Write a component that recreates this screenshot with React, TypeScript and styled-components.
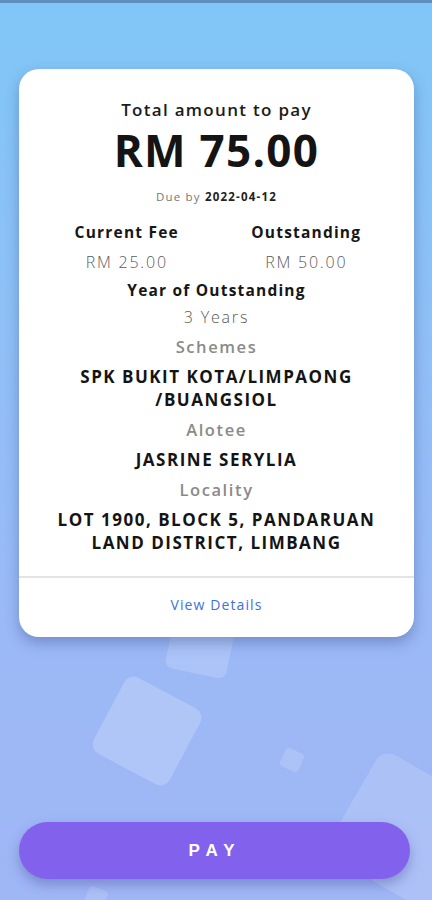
import React from "react";
import styled, { createGlobalStyle } from "styled-components";

const Global = createGlobalStyle`
  html, body { margin: 0; padding: 0; }
  body { font-family: "Open Sans", "Noto Sans", sans-serif; }
  * { box-sizing: border-box; }
`;

const Screen = styled.div`
  position: relative;
  width: 432px;
  height: 900px;
  overflow: hidden;
  display: flex;
  flex-direction: column;
  align-items: stretch;
  background: linear-gradient(180deg, #80c6f7 0%, #8fc0f6 35%, #9bb9f6 70%, #a0b6f5 100%);
`;

const TopStrip = styled.div`
  height: 3px;
  background: #5d8ebd;
  position: relative;
  z-index: 1;
`;

const Deco = styled.div<{ $size: number; $rot: number; $op: number }>`
  position: absolute;
  width: ${(p) => p.$size}px;
  height: ${(p) => p.$size}px;
  border-radius: ${(p) => Math.max(4, p.$size / 8)}px;
  background: rgba(255, 255, 255, ${(p) => p.$op});
  transform: rotate(${(p) => p.$rot}deg);
`;

const Card = styled.div`
  position: relative;
  z-index: 1;
  margin: 66px 18px 0 19px;
  background: #fff;
  border-radius: 20px;
  box-shadow: 0 6px 14px rgba(40, 60, 120, 0.35);
  display: flex;
  flex-direction: column;
  align-items: center;
  text-align: center;
  color: #111;
`;

const Body = styled.div`
  width: 100%;
  padding: 30px 10px 22px;
  display: flex;
  flex-direction: column;
  align-items: center;
`;

const Title = styled.div`
  font-size: 17px;
  font-weight: 600;
  letter-spacing: 1.3px;
  line-height: 22px;
  color: #1b1b1b;
`;

const Amount = styled.div`
  font-size: 44px;
  font-weight: 700;
  line-height: 54px;
  margin-top: 2px;
  letter-spacing: 1.3px;
  color: #141414;
`;

const Due = styled.div`
  font-size: 11.5px;
  line-height: 16px;
  margin-top: 12px;
  color: #777;
  letter-spacing: 1.2px;
  b { color: #222; font-weight: 700; }
`;

const Columns = styled.div`
  width: 100%;
  display: grid;
  grid-template-columns: 1fr 1fr;
  margin-top: 16px;
  padding: 0 8px;
`;

const Col = styled.div`
  display: flex;
  flex-direction: column;
  align-items: center;
`;

const Label = styled.div<{ $gap?: number }>`
  font-size: 15.5px;
  font-weight: 700;
  line-height: 22px;
  letter-spacing: 1.2px;
  color: #161616;
  margin-top: ${(p) => p.$gap ?? 0}px;
`;

const Value = styled.div<{ $gap?: number }>`
  font-size: 16px;
  font-weight: 300;
  line-height: 22px;
  margin-top: ${(p) => p.$gap ?? 8}px;
  letter-spacing: 1.8px;
  color: #5a5a5a;
`;

const SubLabel = styled.div`
  font-size: 16.5px;
  font-weight: 600;
  line-height: 22px;
  letter-spacing: 1.6px;
  color: #8a8a8a;
  margin-top: 8px;
`;

const Strong = styled.div`
  font-size: 17px;
  font-weight: 700;
  line-height: 23px;
  letter-spacing: 1.5px;
  color: #141414;
  margin-top: 7px;
`;

const Divider = styled.div`
  width: 100%;
  height: 1.5px;
  background: #e4e4e6;
`;

const Link = styled.div`
  font-size: 14px;
  font-weight: 500;
  letter-spacing: 1.1px;
  color: #3c70e4;
  line-height: 20px;
  padding: 17px 0 22px;
`;

const Spacer = styled.div`
  flex: 1;
`;

const PayButton = styled.button`
  position: relative;
  z-index: 1;
  margin: 0 22px 21px 19px;
  height: 57px;
  border: none;
  border-radius: 29px;
  background: #8262ec;
  color: #fff;
  font-family: "Liberation Sans", Arial, sans-serif;
  font-weight: 700;
  font-size: 17px;
  letter-spacing: 7px;
  padding-left: 7px;
  box-shadow: 0 6px 12px rgba(60, 60, 140, 0.35);
`;

export default function App() {
  return (
    <Screen>
      <Global />
      <Deco $size={62} $rot={12} $op={0.16} style={{ left: 170, top: 612 }} />
      <Deco $size={86} $rot={28} $op={0.2} style={{ left: 104, top: 688 }} />
      <Deco $size={20} $rot={25} $op={0.16} style={{ left: 282, top: 750 }} />
      <Deco $size={120} $rot={30} $op={0.15} style={{ left: 345, top: 770 }} />
      <Deco $size={20} $rot={20} $op={0.14} style={{ left: 86, top: 888 }} />
      <TopStrip />
      <Card>
        <Body>
          <Title>Total amount to pay</Title>
          <Amount>RM 75.00</Amount>
          <Due>
            Due by <b>2022-04-12</b>
          </Due>
          <Columns>
            <Col>
              <Label>Current Fee</Label>
              <Value>RM 25.00</Value>
            </Col>
            <Col>
              <Label>Outstanding</Label>
              <Value>RM 50.00</Value>
            </Col>
          </Columns>
          <Label $gap={6}>Year of Outstanding</Label>
          <Value $gap={5}>3 Years</Value>
          <SubLabel>Schemes</SubLabel>
          <Strong>
            SPK BUKIT KOTA/LIMPAONG
            <br />
            /BUANGSIOL
          </Strong>
          <SubLabel>Alotee</SubLabel>
          <Strong>JASRINE SERYLIA</Strong>
          <SubLabel>Locality</SubLabel>
          <Strong>
            LOT 1900, BLOCK 5, PANDARUAN
            <br />
            LAND DISTRICT, LIMBANG
          </Strong>
        </Body>
        <Divider />
        <Link>View Details</Link>
      </Card>
      <Spacer />
      <PayButton>PAY</PayButton>
    </Screen>
  );
}
